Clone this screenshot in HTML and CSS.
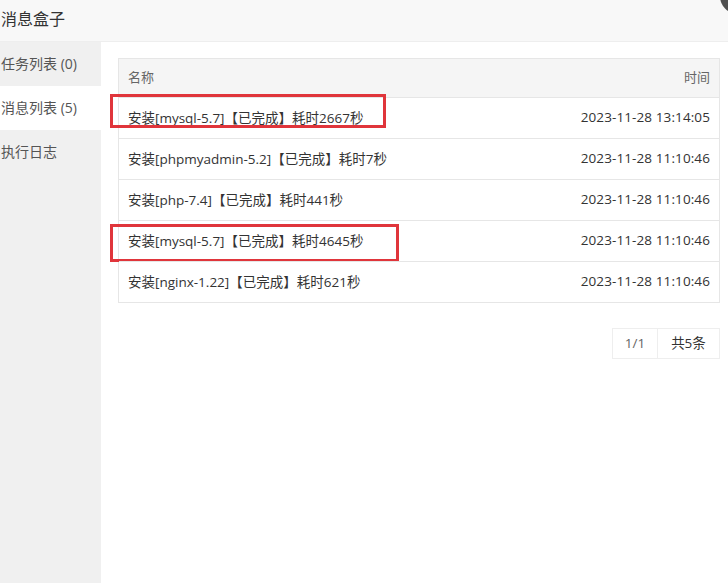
FILE: index.html
```html
<!DOCTYPE html>
<html lang="zh-CN">
<head>
<meta charset="utf-8">
<title>消息盒子</title>
<link rel="stylesheet" href="styles.css">
</head>
<body>
<div class="dialog">
  <div class="dialog-head">消息盒子</div>
  <span class="close-btn"></span>
  <div class="dialog-body">
    <ul class="side-menu">
      <li class="menu-item">任务列表 (0)</li>
      <li class="menu-item active">消息列表 (5)</li>
      <li class="menu-item">执行日志</li>
    </ul>
    <div class="content">
      <div class="table-wrap">
        <div class="row head-row">
          <span class="col-name">名称</span>
          <span class="col-time">时间</span>
        </div>
        <div class="row">
          <span class="col-name">安装[mysql-5.7]【已完成】耗时2667秒</span>
          <span class="col-time">2023-11-28 13:14:05</span>
          <span class="mark mark-1"></span>
        </div>
        <div class="row">
          <span class="col-name">安装[phpmyadmin-5.2]【已完成】耗时7秒</span>
          <span class="col-time">2023-11-28 11:10:46</span>
        </div>
        <div class="row">
          <span class="col-name">安装[php-7.4]【已完成】耗时441秒</span>
          <span class="col-time">2023-11-28 11:10:46</span>
        </div>
        <div class="row">
          <span class="col-name">安装[mysql-5.7]【已完成】耗时4645秒</span>
          <span class="col-time">2023-11-28 11:10:46</span>
          <span class="mark mark-2"></span>
        </div>
        <div class="row">
          <span class="col-name">安装[nginx-1.22]【已完成】耗时621秒</span>
          <span class="col-time">2023-11-28 11:10:46</span>
        </div>
      </div>
      <div class="pager">
        <span class="pager-cell pager-page">1/1</span>
        <span class="pager-cell pager-total">共5条</span>
      </div>
    </div>
  </div>
</div>
</body>
</html>
```

FILE: styles.css
```css
* {
  box-sizing: border-box;
}

html, body {
  margin: 0;
  padding: 0;
  background: #ffffff;
}

body {
  width: 728px;
  height: 583px;
  overflow: hidden;
  font-family: "Open Sans", "Noto Sans CJK SC", sans-serif;
  color: #333333;
}

.dialog {
  position: relative;
  width: 728px;
  height: 583px;
  display: flex;
  flex-direction: column;
}

.dialog-head {
  height: 42px;
  line-height: 38px;
  padding-left: 1px;
  font-size: 16px;
  color: #333333;
  background: #f8f8f8;
  border-bottom: 1px solid #eeeeee;
}

.close-btn {
  position: absolute;
  left: 720px;
  top: -22px;
  width: 36px;
  height: 36px;
  border-radius: 50%;
  background: #505050;
}

.dialog-body {
  flex: 1;
  display: flex;
}

.side-menu {
  list-style: none;
  margin: 0;
  padding: 0;
  width: 101px;
  background: #f0f0f0;
}

.menu-item {
  height: 44px;
  line-height: 44px;
  padding-left: 1px;
  font-size: 14px;
  color: #555555;
}

.menu-item.active {
  background: #ffffff;
}

.content {
  flex: 1;
  padding: 16px 8px 0 17px;
  display: flex;
  flex-direction: column;
}

.table-wrap {
  border: 1px solid #e6e6e6;
}

.row {
  position: relative;
  display: flex;
  justify-content: space-between;
  align-items: center;
  height: 41px;
  padding: 0 9px 3px 9px;
  font-size: 13.5px;
  color: #333333;
  border-top: 1px solid #e6e6e6;
}

.row.head-row {
  height: 38px;
  border-top: none;
  background: #f5f5f5;
  color: #666666;
  font-size: 13px;
}

.col-time {
  letter-spacing: 0.1px;
}

.head-row .col-time {
  letter-spacing: 0;
}

.mark {
  position: absolute;
  border: 3px solid #e0353b;
}

.mark-1 {
  left: -9px;
  top: -4px;
  width: 276px;
  height: 34px;
}

.mark-2 {
  left: -9px;
  top: 3px;
  width: 289px;
  height: 38px;
}

.pager {
  align-self: flex-end;
  display: flex;
  margin-top: 25px;
  border: 1px solid #eeeeee;
  font-size: 13.5px;
}

.pager-cell {
  height: 29px;
  line-height: 28px;
  text-align: center;
}

.pager-page {
  width: 45px;
  color: #666666;
  border-right: 1px solid #eeeeee;
}

.pager-total {
  width: 61px;
  color: #333333;
}
```
